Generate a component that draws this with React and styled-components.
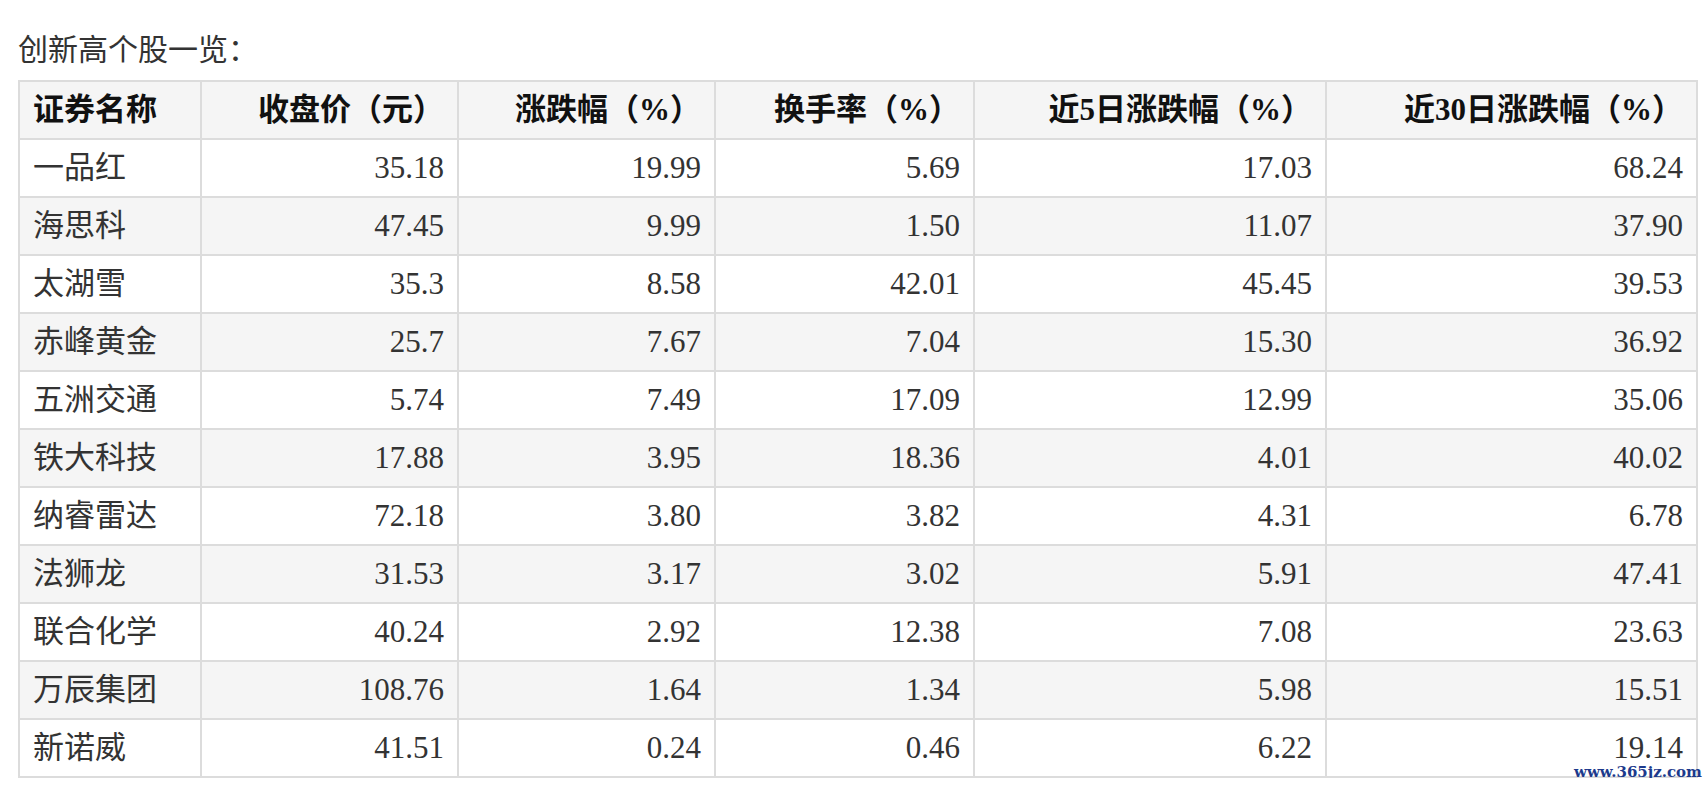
import React from 'react';
import styled, { createGlobalStyle } from 'styled-components';

const GlobalStyle = createGlobalStyle`
  body {
    margin: 0;
    background: #fff;
    font-family: "Liberation Serif", "Noto Sans CJK SC", serif;
  }
`;

const Page = styled.div`
  position: relative;
  padding: 30px 8px 0 18px;
  width: 1678px;
`;

const Title = styled.div`
  font-size: 30px;
  line-height: 40px;
  color: #333;
  margin-bottom: 10px;
`;

const Table = styled.table`
  border-collapse: collapse;
  table-layout: fixed;
  width: 1678px;
  font-size: 31px;
  line-height: 36px;
`;

const Row = styled.tr`
  background: ${({ striped }) => (striped ? '#f5f5f5' : '#fff')};
`;

const HeadCell = styled.th`
  border: 2px solid #dcdcdc;
  padding: 10px 13px;
  font-weight: bold;
  color: #111;
  white-space: nowrap;
  text-align: ${({ left }) => (left ? 'left' : 'right')};
`;

const Cell = styled.td`
  border: 2px solid #dcdcdc;
  padding: 10px 13px;
  color: #333;
  white-space: nowrap;
  text-align: ${({ left }) => (left ? 'left' : 'right')};
`;

// site stamp laid over the table's bottom-right corner
const Watermark = styled.div`
  position: absolute;
  right: 2px;
  bottom: -3px;
  font-family: "DejaVu Serif", serif;
  font-size: 15px;
  line-height: 18px;
  font-weight: bold;
  color: #1c3a8c;
`;

const columns = [
  { label: '证券名称', width: 182 },
  { label: '收盘价（元）', width: 257 },
  { label: '涨跌幅（%）', width: 257 },
  { label: '换手率（%）', width: 259 },
  { label: '近5日涨跌幅（%）', width: 352 },
  { label: '近30日涨跌幅（%）', width: 371 },
];

const rows = [
  ['一品红', '35.18', '19.99', '5.69', '17.03', '68.24'],
  ['海思科', '47.45', '9.99', '1.50', '11.07', '37.90'],
  ['太湖雪', '35.3', '8.58', '42.01', '45.45', '39.53'],
  ['赤峰黄金', '25.7', '7.67', '7.04', '15.30', '36.92'],
  ['五洲交通', '5.74', '7.49', '17.09', '12.99', '35.06'],
  ['铁大科技', '17.88', '3.95', '18.36', '4.01', '40.02'],
  ['纳睿雷达', '72.18', '3.80', '3.82', '4.31', '6.78'],
  ['法狮龙', '31.53', '3.17', '3.02', '5.91', '47.41'],
  ['联合化学', '40.24', '2.92', '12.38', '7.08', '23.63'],
  ['万辰集团', '108.76', '1.64', '1.34', '5.98', '15.51'],
  ['新诺威', '41.51', '0.24', '0.46', '6.22', '19.14'],
];

export default function App() {
  return (
    <>
      <GlobalStyle />
      <Page>
        <Title>创新高个股一览：</Title>
        <Table>
          <colgroup>
            {columns.map((col) => (
              <col key={col.label} style={{ width: col.width }} />
            ))}
          </colgroup>
          <thead>
            <Row striped>
              {columns.map((col, i) => (
                <HeadCell key={col.label} left={i === 0}>
                  {col.label}
                </HeadCell>
              ))}
            </Row>
          </thead>
          <tbody>
            {rows.map((row, r) => (
              <Row key={row[0]} striped={r % 2 === 1}>
                {row.map((value, i) => (
                  <Cell key={i} left={i === 0}>
                    {value}
                  </Cell>
                ))}
              </Row>
            ))}
          </tbody>
        </Table>
        <Watermark>www.365jz.com</Watermark>
      </Page>
    </>
  );
}
